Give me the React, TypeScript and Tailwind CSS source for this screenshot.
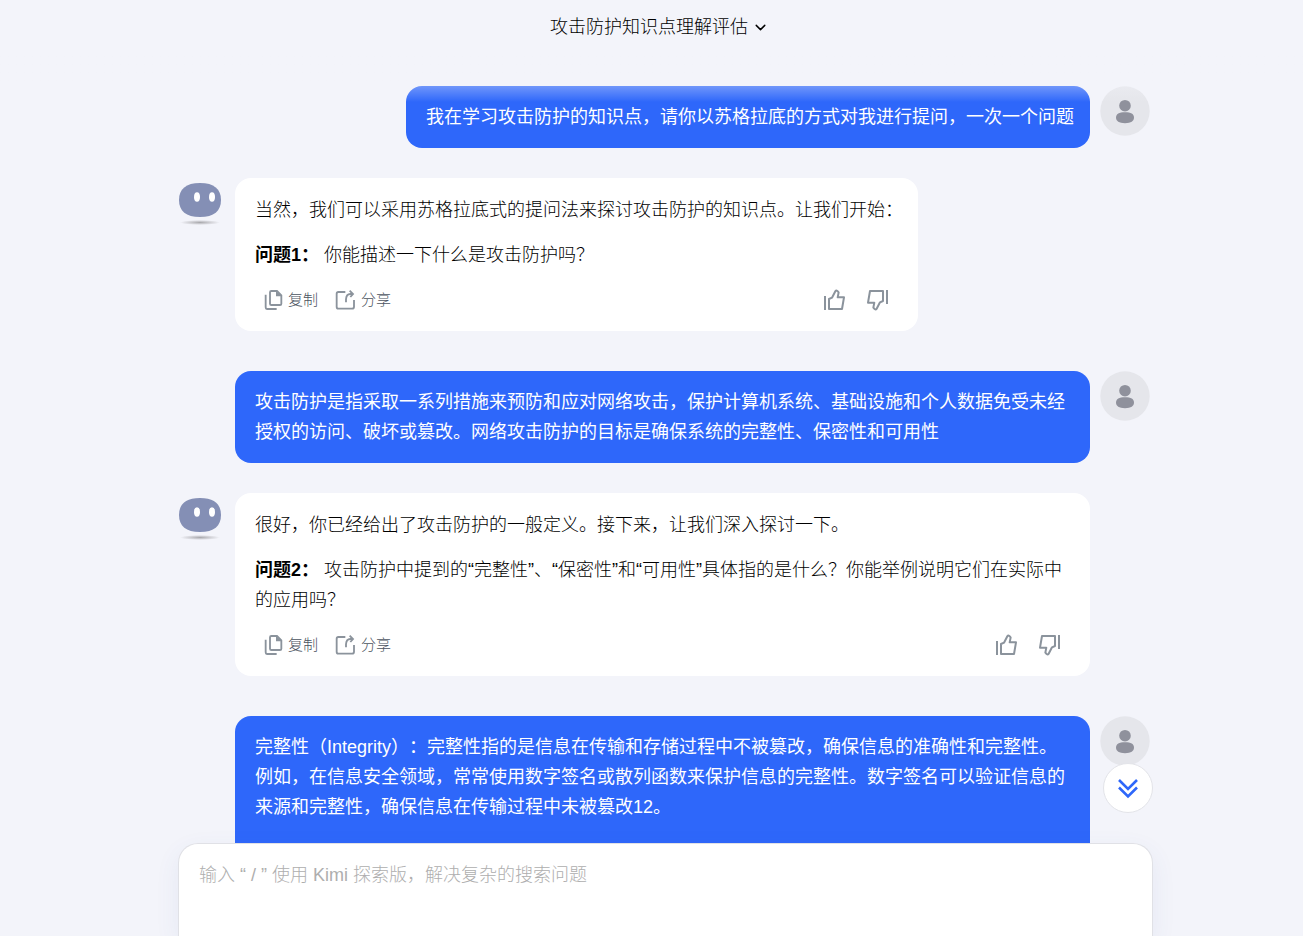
import { useState } from "react";
import type { ReactNode } from "react";
import { ChevronDown } from "lucide-react";

const CopyIcon = () => (
  <svg viewBox="0 0 66 66" className="h-[22px] w-[22px]" fill="none" stroke="currentColor" strokeWidth="5.5" aria-hidden="true">
    <path d="M8 17V55Q8 60 12 60H41" />
    <path d="M25 6H42L55 19V44Q55 48 51 48H25Q21 48 21 44V10Q21 6 25 6Z" />
    <path d="M39 5V22H57Z" fill="currentColor" stroke="none" />
  </svg>
);

const ShareIcon = () => (
  <svg viewBox="0 0 66 66" className="h-[22px] w-[22px]" fill="none" stroke="currentColor" strokeWidth="5.5" aria-hidden="true">
    <path d="M31 9H10Q5 9 5 14V53Q5 59 10 59H51Q57 59 57 53V33" />
    <path d="M33 40V31Q34 15 46 15H53" />
    <path d="M44 5L54 15L46 24" />
  </svg>
);

const ThumbIcon = ({ className = "" }: { className?: string }) => (
  <svg viewBox="0 0 72 72" className={`h-6 w-6 ${className}`} fill="none" stroke="currentColor" strokeWidth="6" strokeLinejoin="round" aria-hidden="true">
    <path d="M9 24V66" />
    <path d="M21 33L30 29L40 10Q42 6 46 9L50 13L47 28H66L60 63H21Z" />
  </svg>
);

const BotAvatar = () => (
  <svg viewBox="0 0 44 48" className="h-12 w-11" aria-hidden="true">
    <defs>
      <radialGradient id="bot-shadow">
        <stop offset="0" stopColor="#a9a9ad" />
        <stop offset="0.5" stopColor="#cfcfd4" />
        <stop offset="1" stopColor="#f3f4fa" />
      </radialGradient>
    </defs>
    <ellipse cx="22" cy="44.5" rx="20" ry="2.5" fill="url(#bot-shadow)" />
    <path d="M22 5C36 5 43 11 43 22S36 39 22 39S1 33 1 22S8 5 22 5Z" fill="#848fb5" />
    <ellipse cx="19" cy="19" rx="3" ry="4.8" fill="#fff" />
    <ellipse cx="34" cy="19" rx="3" ry="4.8" fill="#fff" />
  </svg>
);

const UserAvatar = () => (
  <svg viewBox="0 0 50 50" className="h-[50px] w-[50px] shrink-0" aria-hidden="true">
    <circle cx="25" cy="25" r="24.7" fill="#e5e6eb" />
    <circle cx="25" cy="19.7" r="5.8" fill="#8f919c" />
    <path d="M25 26.2C31 26.2 34 28 34 31.6S31 37.2 25 37.2S16 35.2 16 31.6S19 26.2 25 26.2Z" fill="#8f919c" />
  </svg>
);

const UserMessage = ({ children, long }: { children: ReactNode; long?: boolean }) => (
  <div className="flex justify-end gap-[10px] pr-[3px] pl-[57px]">
    <div
      className={`rounded-2xl bg-[#2e67fa] py-4 pr-4 pl-5 text-lg leading-[30px] whitespace-pre-line text-white ${
        long ? "min-h-40" : ""
      }`}
    >
      {children}
    </div>
    <UserAvatar />
  </div>
);

const BotMessage = ({ children }: { children: ReactNode }) => (
  <div className="flex pr-[63px]">
    <div className="w-[57px] shrink-0">
      <BotAvatar />
    </div>
    <div className="rounded-2xl bg-white pt-[17px] pr-[15px] pb-4 pl-5 text-lg leading-[30px] font-light text-black">
      <div className="flex flex-col gap-[15px]">{children}</div>
      <div className="mt-[15px] flex h-[30px] items-center text-[#8b939c]">
        <button className="ml-2 flex items-center gap-[3px]">
          <CopyIcon />
          <span className="text-[15px] text-[#4b5360]">复制</span>
        </button>
        <button className="ml-[17px] flex items-center gap-1">
          <ShareIcon />
          <span className="text-[15px] text-[#4b5360]">分享</span>
        </button>
        <button className="ml-auto" aria-label="赞">
          <ThumbIcon />
        </button>
        <button className="mr-[13px] ml-5" aria-label="踩">
          <ThumbIcon className="rotate-180" />
        </button>
      </div>
    </div>
  </div>
);

const App = () => {
  const [text, setText] = useState("");

  return (
    <div
      lang="zh-CN"
      className="relative flex h-screen flex-col overflow-hidden bg-[#f3f4fa] font-['Liberation_Sans','Noto_Sans_CJK_SC',sans-serif] [text-spacing-trim:space-all]"
    >
      <header className="absolute inset-x-0 top-0 z-10">
        <div className="flex h-[54px] items-center justify-center bg-[#f3f4fa] pl-4">
          <button className="flex items-center gap-1 text-lg font-light text-black">
            攻击防护知识点理解评估
            <ChevronDown size={17} strokeWidth={2} />
          </button>
        </div>
        <div className="pointer-events-none h-12 bg-linear-to-b from-[#f3f4fa] to-[#f3f4fa]/0" />
      </header>

      <main className="min-h-0 flex-1 overflow-hidden pt-[86px] pl-7">
        <div className="mx-auto flex max-w-[975px] flex-col">
          <UserMessage>我在学习攻击防护的知识点，请你以苏格拉底的方式对我进行提问，一次一个问题</UserMessage>
          <div className="mt-[30px] mb-10">
            <BotMessage>
              <p>当然，我们可以采用苏格拉底式的提问法来探讨攻击防护的知识点。让我们开始：</p>
              <p>
                <strong className="font-bold">问题1：</strong> 你能描述一下什么是攻击防护吗？
              </p>
            </BotMessage>
          </div>
          <UserMessage>
            攻击防护是指采取一系列措施来预防和应对网络攻击，保护计算机系统、基础设施和个人数据免受未经授权的访问、破坏或篡改。网络攻击防护的目标是确保系统的完整性、保密性和可用性
          </UserMessage>
          <div className="mt-[30px] mb-10">
            <BotMessage>
              <p>很好，你已经给出了攻击防护的一般定义。接下来，让我们深入探讨一下。</p>
              <p>
                <strong className="font-bold">问题2：</strong>{" "}
                攻击防护中提到的“完整性”、“保密性”和“可用性”具体指的是什么？你能举例说明它们在实际中的应用吗？
              </p>
            </BotMessage>
          </div>
          <UserMessage long>
            {
              "完整性（Integrity）：完整性指的是信息在传输和存储过程中不被篡改，确保信息的准确性和完整性。\n例如，在信息安全领域，常常使用数字签名或散列函数来保护信息的完整性。数字签名可以验证信息的来源和完整性，确保信息在传输过程中未被篡改12。"
            }
          </UserMessage>
        </div>
      </main>

      <footer className="pl-7">
        <div className="relative mx-auto max-w-[975px]">
          <button
            aria-label="滚动到底部"
            className="absolute right-0 bottom-full mb-[30px] flex h-[50px] w-[50px] items-center justify-center rounded-full border border-[#e3e4e9] bg-white text-[#2e67fa]"
          >
            <svg viewBox="0 0 24 24" className="h-6 w-6" fill="none" stroke="currentColor" strokeWidth="2.6" aria-hidden="true">
              <path d="M3 4L12 13L21 4" />
              <path d="M3 11.5L12 20.5L21 11.5" />
            </svg>
          </button>
          <div className="rounded-t-[20px] border border-b-0 border-[#e0e1e6] bg-white px-5 pt-4 shadow-[0_8px_24px_rgba(60,90,160,0.08)]">
            <textarea
              aria-label="输入消息"
              value={text}
              onChange={(e) => setText(e.target.value)}
              placeholder="输入 “ / ” 使用 Kimi 探索版，解决复杂的搜索问题"
              className="block h-[76px] w-full resize-none text-lg leading-[30px] font-light placeholder:text-[#aeaeae] focus:outline-none"
            />
          </div>
        </div>
      </footer>
    </div>
  );
};

export default App;
